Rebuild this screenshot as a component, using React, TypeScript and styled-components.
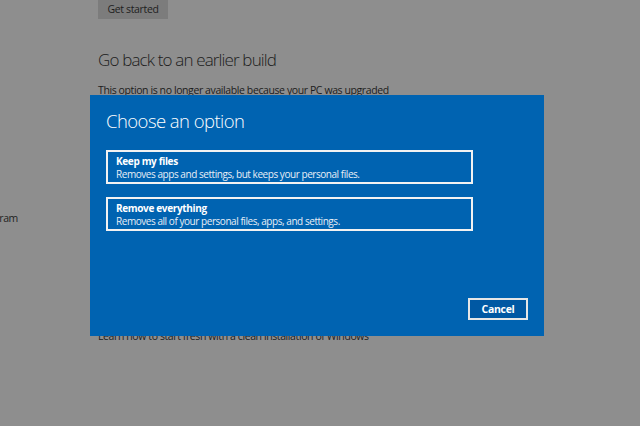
import styled, { createGlobalStyle } from 'styled-components';

const GlobalStyle = createGlobalStyle`
  html, body {
    margin: 0;
    padding: 0;
    background: #8e8e8e;
    font-family: "Open Sans", "Noto Sans", sans-serif;
  }
`;

const Screen = styled.div`
  position: relative;
  width: 640px;
  height: 426px;
  overflow: hidden;
  background: #8e8e8e;
  display: grid;
  grid-template-columns: 18px 1fr;
  column-gap: 80px;
`;

const Sidebar = styled.nav`
  padding-top: 211px;
  overflow: hidden;
  direction: rtl;
`;

const NavItem = styled.div`
  font-size: 10.5px;
  letter-spacing: -0.35px;
  color: #1f1f1f;
  white-space: nowrap;
  line-height: 14px;
`;

const Content = styled.main`
  display: flex;
  flex-direction: column;
  align-items: flex-start;
`;

const GrayButton = styled.button`
  margin-top: -4px;
  height: 23px;
  width: 70px;
  padding: 2px 0 0;
  border: none;
  background: #7c7c7c;
  color: #1e1e1e;
  font-family: inherit;
  font-size: 10.5px;
  letter-spacing: -0.35px;
`;

const SectionTitle = styled.h2`
  margin: 29px 0 0;
  font-size: 17px;
  font-weight: 300;
  letter-spacing: -0.85px;
  color: #1c1c1c;
  line-height: 24px;
`;

const Note = styled.p`
  margin: 11px 0 0;
  font-size: 10.5px;
  letter-spacing: -0.4px;
  color: #1c1c1c;
  line-height: 14px;
`;

const Link = styled(Note)`
  margin-top: 232px;
`;

const Dialog = styled.section`
  position: absolute;
  left: 90px;
  top: 95px;
  width: 454px;
  height: 241px;
  box-sizing: border-box;
  padding: 13px 16px 16px;
  background: #0063b1;
  color: #ffffff;
  display: flex;
  flex-direction: column;
`;

const DialogTitle = styled.h1`
  margin: 0;
  font-size: 18.5px;
  font-weight: 300;
  letter-spacing: -0.55px;
  line-height: 26px;
`;

const Options = styled.div`
  margin-top: 16px;
  display: flex;
  flex-direction: column;
  gap: 13px;
`;

const Option = styled.button`
  width: 367px;
  height: 34px;
  box-sizing: border-box;
  border: 2px solid #f2f2f2;
  background: transparent;
  color: #ffffff;
  font-family: inherit;
  text-align: left;
  padding: 3px 8px 0;
  display: flex;
  flex-direction: column;
  justify-content: flex-start;
`;

const OptionTitle = styled.span`
  font-size: 10px;
  font-weight: 700;
  line-height: 13px;
  letter-spacing: -0.35px;
`;

const OptionText = styled.span`
  font-size: 10px;
  line-height: 13px;
  letter-spacing: -0.45px;
  color: #e8eef6;
`;

const Footer = styled.div`
  margin-top: auto;
  display: flex;
  justify-content: flex-end;
`;

const CancelButton = styled.button`
  width: 60px;
  height: 22px;
  box-sizing: border-box;
  border: 2px solid #e6e6e6;
  background: #0058a3;
  color: #ffffff;
  font-family: inherit;
  font-size: 10.5px;
  font-weight: 700;
  letter-spacing: -0.3px;
  padding: 0;
`;

const options = [
  {
    title: 'Keep my files',
    text: 'Removes apps and settings, but keeps your personal files.',
  },
  {
    title: 'Remove everything',
    text: 'Removes all of your personal files, apps, and settings.',
  },
];

export default function App() {
  return (
    <>
      <GlobalStyle />
      <Screen>
        <Sidebar>
          <NavItem>Windows Insider Program</NavItem>
        </Sidebar>
        <Content>
          <GrayButton>Get started</GrayButton>
          <SectionTitle>Go back to an earlier build</SectionTitle>
          <Note>This option is no longer available because your PC was upgraded</Note>
          <Link>Learn how to start fresh with a clean installation of Windows</Link>
        </Content>
        <Dialog>
          <DialogTitle>Choose an option</DialogTitle>
          <Options>
            {options.map((item) => (
              <Option key={item.title}>
                <OptionTitle>{item.title}</OptionTitle>
                <OptionText>{item.text}</OptionText>
              </Option>
            ))}
          </Options>
          <Footer>
            <CancelButton>Cancel</CancelButton>
          </Footer>
        </Dialog>
      </Screen>
    </>
  );
}
